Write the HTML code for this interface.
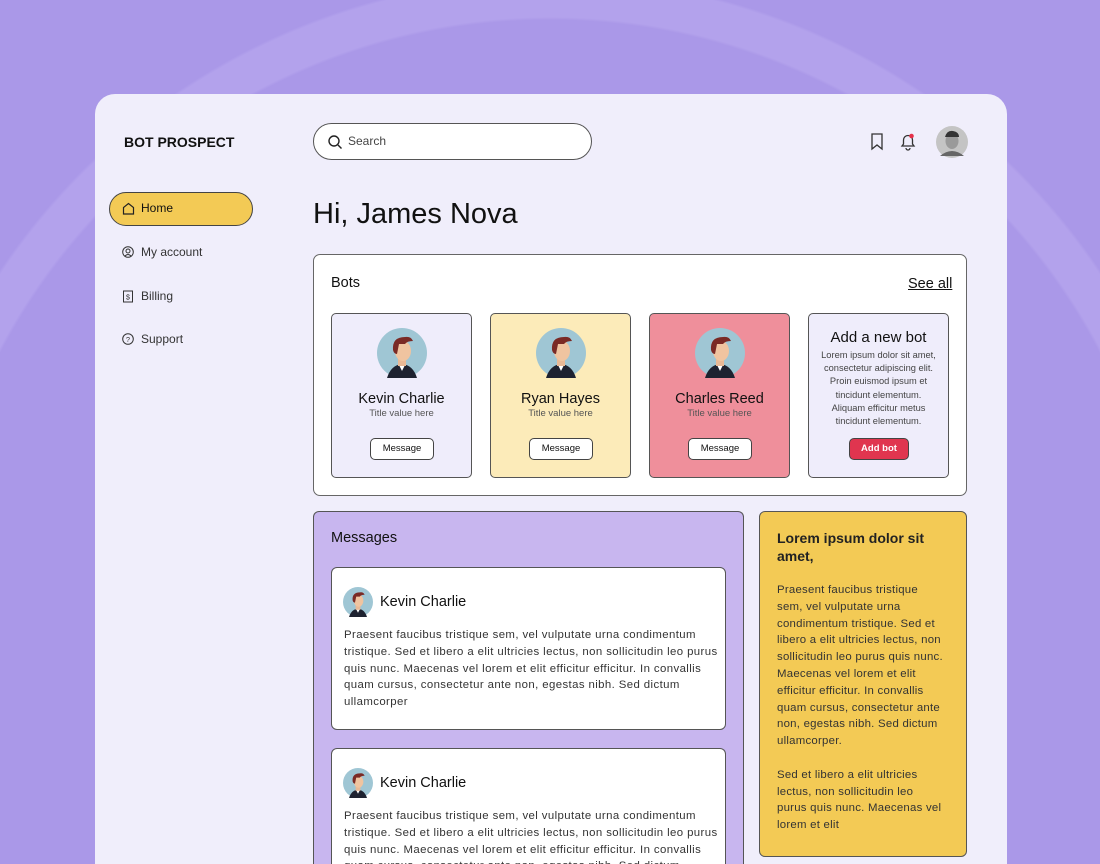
<!DOCTYPE html>
<html style="width:1100px;height:864px;overflow:hidden"><head><meta charset="utf-8"><style>
*{box-sizing:border-box;margin:0;padding:0}
body{width:1100px;height:864px;overflow:hidden;font-family:"Liberation Sans",sans-serif;color:#111;
background:#aa98e8 repeating-radial-gradient(circle at 550px 640px,#aa98e8 0 120px,#b3a2ec 123px 160px,#aa98e8 163px 250px);position:relative}
.a{position:absolute}
.panel{left:95px;top:94px;width:912px;height:770px;background:#f0eefb;border-radius:20px 20px 0 0}
.card{border:1px solid #555;border-radius:5px;width:141px;height:165px;top:313px;text-align:center}
.card .nm{position:absolute;top:77px;width:100%;font-size:14.5px}
.card .tt{position:absolute;top:94px;width:100%;font-size:9.5px;color:#555}
.btn{position:absolute;top:124px;left:38px;width:64px;height:22px;border:1px solid #444;border-radius:5px;background:#fff;font-size:9.5px;line-height:20px}
.av{position:absolute;left:45px;top:14px}
.msg{left:331px;width:395px;background:#fff;border:1px solid #555;border-radius:6px}
.msg .n{position:absolute;left:48px;top:26px;font-size:14.5px}
.msg p{position:absolute;left:12px;top:59px;white-space:nowrap;font-size:11.4px;letter-spacing:0.4px;line-height:16.8px;color:#333}
.nav{left:122px;font-size:12px;color:#333;display:flex;align-items:center;gap:7px}
</style></head><body>
<svg width="0" height="0" style="position:absolute"><defs>
<g id="bot"><circle cx="25" cy="25" r="25" fill="#9fc6d4"/><path d="M10 50 Q14 37 25 36 Q36 37 40 50Z" fill="#1e2230"/><path d="M22 37 L25 43 L28 37Z" fill="#fff"/><rect x="21" y="28" width="8" height="10" fill="#e9b996"/><ellipse cx="26" cy="23" rx="8" ry="10" fill="#f0c4a0"/><path d="M16 22 Q15 9 28 9 Q34 8 36 13 Q30 13 28 16 L22 16 L20 26 Q17 26 16 22Z" fill="#7a2a25"/></g>
</defs></svg>
<div class="a panel"></div>
<div class="a" style="left:124px;top:134px;font-weight:bold;font-size:14px">BOT PROSPECT</div>
<div class="a" style="left:313px;top:123px;width:279px;height:37px;border:1.3px solid #555;border-radius:19px;background:#fff"></div>
<svg class="a" style="left:327px;top:134px" width="16" height="16" viewBox="0 0 16 16"><circle cx="7" cy="7" r="5" fill="none" stroke="#222" stroke-width="1.4"/><path d="M11 11l3.5 3.5" stroke="#222" stroke-width="1.4"/></svg>
<div class="a" style="left:348px;top:134px;font-size:12px;color:#444">Search</div>
<svg class="a" style="left:870px;top:133px" width="14" height="18" viewBox="0 0 14 18"><path d="M2 1h10v15l-5-4-5 4z" fill="none" stroke="#333" stroke-width="1.3"/></svg>
<svg class="a" style="left:899px;top:132px" width="18" height="20" viewBox="0 0 18 20"><path d="M3 14h12l-1.5-2V8a4.5 4.5 0 0 0-9 0v4z M7 16a2 2 0 0 0 4 0" fill="none" stroke="#333" stroke-width="1.3"/><circle cx="12.5" cy="4" r="2.3" fill="#e5304a"/></svg>
<svg class="a" style="left:936px;top:126px" width="32" height="32"><circle cx="16" cy="16" r="16" fill="#c4c4c4"/><ellipse cx="16" cy="15" rx="6.5" ry="8" fill="#9a9a9a"/><path d="M9 11q2-7 8-6 6 1 6 6" fill="#333"/><path d="M4 30q12-10 24 0" fill="#666"/></svg>
<div class="a" style="left:109px;top:192px;width:144px;height:34px;background:#f3ca55;border:1.2px solid #444;border-radius:17px"></div>
<svg class="a" style="left:122px;top:202px" width="13" height="13" viewBox="0 0 13 13"><path d="M1.5 12V5.5L6.5 1.5 11.5 5.5V12z" fill="none" stroke="#222" stroke-width="1.2"/></svg>
<div class="a" style="left:141px;top:201px;font-size:12px">Home</div>
<div class="a nav" style="top:245px"><svg width="12" height="12"><circle cx="6" cy="6" r="5.3" fill="none" stroke="#333"/><circle cx="6" cy="5" r="2" fill="none" stroke="#333"/><path d="M3 10q3-3 6 0" fill="none" stroke="#333"/></svg>My account</div>
<div class="a nav" style="top:289px"><svg width="12" height="13"><rect x="1.5" y="1" width="9" height="11" fill="none" stroke="#333"/><text x="6" y="9.5" font-size="7" text-anchor="middle" fill="#333">$</text></svg>Billing</div>
<div class="a nav" style="top:332px"><svg width="12" height="12"><circle cx="6" cy="6" r="5.3" fill="none" stroke="#333"/><text x="6" y="9" font-size="7.5" text-anchor="middle" fill="#333">?</text></svg>Support</div>
<div class="a" style="left:313px;top:198px;font-size:29px">Hi, James Nova</div>
<div class="a" style="left:313px;top:254px;width:654px;height:242px;background:#fff;border:1.2px solid #666;border-radius:7px"></div>
<div class="a" style="left:331px;top:275px;font-size:14.5px">Bots</div>
<div class="a" style="left:908px;top:276px;font-size:14.5px;text-decoration:underline">See all</div>
<div class="a card" style="left:331px;background:#efedfb"><svg class="av" width="50" height="50"><use href="#bot"/></svg><div class="nm">Kevin Charlie</div><div class="tt">Title value here</div><div class="btn">Message</div></div>
<div class="a card" style="left:490px;background:#fcebb9"><svg class="av" width="50" height="50"><use href="#bot"/></svg><div class="nm">Ryan Hayes</div><div class="tt">Title value here</div><div class="btn">Message</div></div>
<div class="a card" style="left:649px;background:#ef8f9b"><svg class="av" width="50" height="50"><use href="#bot"/></svg><div class="nm">Charles Reed</div><div class="tt">Title value here</div><div class="btn">Message</div></div>
<div class="a card" style="left:808px;background:#efedfb"><div style="position:absolute;top:15px;width:100%;font-size:15px">Add a new bot</div><div style="position:absolute;top:35px;left:0;right:0;font-size:9.3px;line-height:13.2px;color:#444;white-space:nowrap">Lorem ipsum dolor sit amet,<br>consectetur adipiscing elit.<br>Proin euismod ipsum et<br>tincidunt elementum.<br>Aliquam efficitur metus<br>tincidunt elementum.</div><div class="btn" style="left:40px;width:60px;background:#e0354f;color:#fff;font-weight:bold">Add bot</div></div>
<div class="a" style="left:313px;top:511px;width:431px;height:353px;background:#c8b6ef;border:1.2px solid #555;border-bottom:none;border-radius:6px 6px 0 0"></div>
<div class="a" style="left:331px;top:530px;font-size:14.5px">Messages</div>
<div class="a msg" style="top:567px;height:163px"><svg class="a" style="left:11px;top:19px" width="30" height="30" viewBox="0 0 50 50"><use href="#bot"/></svg><div class="n">Kevin Charlie</div><p>Praesent faucibus tristique sem, vel vulputate urna condimentum<br>tristique. Sed et libero a elit ultricies lectus, non sollicitudin leo purus<br>quis nunc. Maecenas vel lorem et elit efficitur efficitur. In convallis<br>quam cursus, consectetur ante non, egestas nibh. Sed dictum<br>ullamcorper</p></div>
<div class="a msg" style="top:748px;height:116px;border-bottom:none;border-radius:6px 6px 0 0;overflow:hidden"><svg class="a" style="left:11px;top:19px" width="30" height="30" viewBox="0 0 50 50"><use href="#bot"/></svg><div class="n">Kevin Charlie</div><p>Praesent faucibus tristique sem, vel vulputate urna condimentum<br>tristique. Sed et libero a elit ultricies lectus, non sollicitudin leo purus<br>quis nunc. Maecenas vel lorem et elit efficitur efficitur. In convallis<br>quam cursus, consectetur ante non, egestas nibh. Sed dictum</p></div>
<div class="a" style="left:759px;top:511px;width:208px;height:346px;background:#f3ca55;border:1.2px solid #555;border-radius:6px"></div>
<div class="a" style="left:777px;top:529px;white-space:nowrap;font-size:14px;line-height:18px;font-weight:bold;color:#222">Lorem ipsum dolor sit<br>amet,</div>
<div class="a" style="left:777px;top:582px;white-space:nowrap;font-size:11.4px;letter-spacing:0.25px;line-height:16.8px;color:#333">Praesent faucibus tristique<br>sem, vel vulputate urna<br>condimentum tristique. Sed et<br>libero a elit ultricies lectus, non<br>sollicitudin leo purus quis nunc.<br>Maecenas vel lorem et elit<br>efficitur efficitur. In convallis<br>quam cursus, consectetur ante<br>non, egestas nibh. Sed dictum<br>ullamcorper.<br><br>Sed et libero a elit ultricies<br>lectus, non sollicitudin leo<br>purus quis nunc. Maecenas vel<br>lorem et elit</div>
</body></html>
